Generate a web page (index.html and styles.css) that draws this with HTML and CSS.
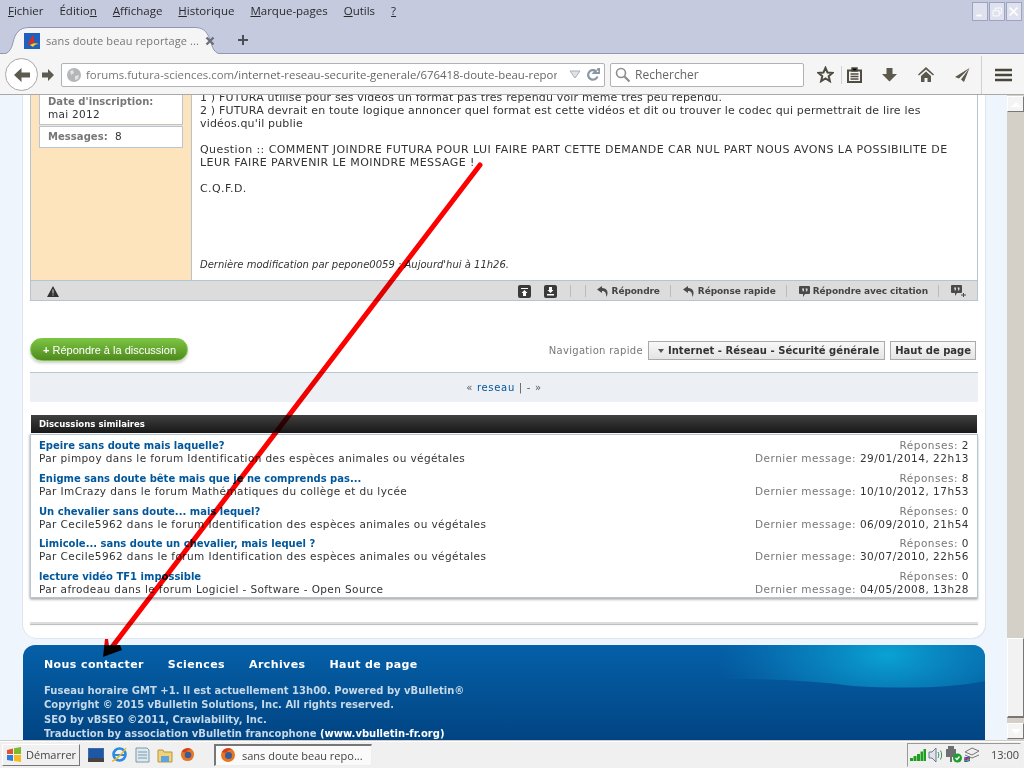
FILE: index.html
```html
<!DOCTYPE html>
<html lang="fr">
<head>
<meta charset="utf-8">
<title>sans doute beau reportage</title>
<link rel="stylesheet" href="styles.css">
</head>
<body>
<div class="chrome">
  <div class="menubar">
    <span class="mi"><u>F</u>ichier</span><span class="mi">Éditio<u>n</u></span><span class="mi"><u>A</u>ffichage</span><span class="mi"><u>H</u>istorique</span><span class="mi"><u>M</u>arque-pages</span><span class="mi"><u>O</u>utils</span><span class="mi"><u>?</u></span>
    <div class="winbtns">
      <span class="winbtn"><svg width="16" height="16" viewBox="0 0 16 16"><rect x="4" y="11" width="6" height="2" fill="#fff"/></svg></span>
      <span class="winbtn"><svg width="16" height="16" viewBox="0 0 16 16"><path d="M3.500 6.500h7v6h-7zM6 6V3.500h7v6h-2" fill="none" stroke="#fff"/></svg></span>
      <span class="winbtn"><svg width="16" height="16" viewBox="0 0 16 16"><path d="M3 3l9 9M12 3l-9 9" stroke="#fff" stroke-width="2"/></svg></span>
    </div>
  </div>
  <div class="tabbar">
    <div class="tab">
      <svg class="tabshape" width="226" height="28" viewBox="0 0 226 28"><path d="M0 27.500c8 0 11-4 13-12 2-9 6-15 16-15h166c10 0 13 6 16 15 2 8 5 12 14 12" fill="#f5f5f5" stroke="#8d98b4"/></svg>
      <svg class="favicon" width="16" height="16" viewBox="0 0 16 16"><rect width="16" height="16" fill="#1f5fc0"/><path d="M4 13C5 7 8 3 11 2c-2 3-2 6 1 8-3-1-6 0-8 3z" fill="#e02a1c"/><path d="M6 12c3-2 6-2 9-1-3 0-5 1-6 3z" fill="#f7d21a"/></svg>
      <span class="tabtitle">sans doute beau reportage ...</span>
      <svg class="tabclose" width="10" height="10" viewBox="0 0 10 10"><path d="M1.500 1.500l7 7M8.500 1.500l-7 7" stroke="#6c7078" stroke-width="2.400"/></svg>
    </div>
    <svg class="newtab" width="12" height="12" viewBox="0 0 12 12"><path d="M6 1v10M1 6h10" stroke="#4a5058" stroke-width="2"/></svg>
  </div>
  <div class="navbar">
    <span class="backbtn"><svg width="16" height="14" viewBox="0 0 16 14"><path d="M7.500 0L0 7l7.500 7V9.500H16v-5H7.500z" fill="#5d5a50"/></svg></span>
    <svg class="fwd" width="12" height="12" viewBox="0 0 12 12"><path d="M6 0l6 6-6 6V8.500H0v-5h6z" fill="#5d5a50"/></svg>
    <div class="urlbar">
      <svg class="globe" width="14" height="14" viewBox="0 0 14 14"><circle cx="7" cy="7" r="7" fill="#b4b6b8"/><path d="M3 3l3-1 1 3-3 2zM8 8l4-1-1 4-3 1z" fill="#e2e3e4"/></svg>
      <span class="urltext"><span class="urlhost">forums.futura-sciences.com</span>/internet-reseau-securite-generale/676418-doute-beau-repor</span>
      <svg class="drop" width="12" height="9" viewBox="0 0 12 9"><path d="M1 1h10L6 8z" fill="#dfe3e8" stroke="#a9afb6"/></svg>
      <svg class="reload" width="14" height="14" viewBox="0 0 14 14"><path d="M11.500 8.500A4.800 4.800 0 1 1 9.800 3L8 5h5.500V0L11.300 2.100" fill="none" stroke="#8a97a3" stroke-width="2.200"/></svg>
    </div>
    <div class="searchbar">
      <svg width="15" height="15" viewBox="0 0 15 15"><circle cx="6" cy="6" r="4.500" fill="none" stroke="#8c8f92" stroke-width="1.600"/><path d="M9.500 9.500l5 5" stroke="#8c8f92" stroke-width="2.200"/></svg>
      <span>Rechercher</span>
    </div>
    <div class="tools">
      <svg class="t-star" width="17" height="17" viewBox="0 0 17 17"><path d="M8.500 1.800l2 4.700 5 .4-3.800 3.300 1.200 5-4.400-2.700-4.400 2.700 1.200-5L1.500 6.900l5-.4z" fill="none" stroke="#4f4c41" stroke-width="2"/></svg>
      <i class="t-sep"></i>
      <svg class="t-clip" width="15" height="16" viewBox="0 0 15 16"><path d="M1 3.500h13V15H1z" fill="none" stroke="#4f4c41" stroke-width="2"/><path d="M5 1h5v3H5zM3.500 7h8M3.500 9.500h8M3.500 12h8" stroke="#4f4c41" stroke-width="1.500"/></svg>
      <svg class="t-down" width="15" height="15" viewBox="0 0 15 15"><path d="M4.500 1h6v6H15l-7.500 7.500L0 7h4.500z" fill="#5b584c"/></svg>
      <svg class="t-home" width="16" height="15" viewBox="0 0 16 15"><path d="M8 0l8 7.500-1 1L8 2.500 1 8.500l-1-1zM3 9l5-4.500L13 9v6H9.500v-4h-3v4H3z" fill="#5b584c"/></svg>
      <svg class="t-plane" width="15" height="16" viewBox="0 0 15 16"><path d="M14.500 1L0 10l4 1.500L14.500 1 6 12.500 9 15z" fill="#5b584c"/></svg>
      <i class="t-sep t-sep2"></i>
      <svg class="t-menu" width="17" height="14" viewBox="0 0 17 14"><path d="M0 2h17M0 7h17M0 12h17" stroke="#49473d" stroke-width="2.600"/></svg>
    </div>
  </div>
</div>

<main class="viewport">
  <div class="page">
    <div class="card">
      <article class="post">
        <aside class="userinfo">
          <div class="ubox ubox-date"><b>Date d'inscription:</b><br>mai 2012</div>
          <div class="ubox ubox-msg"><b>Messages:</b>&nbsp; 8</div>
        </aside>
        <div class="message">
          <p class="body">1 ) FUTURA utilise pour ses vidéos un format pas très répendu voir même très peu répendu.<br>2 ) FUTURA devrait en toute logique annoncer quel format est cette vidéos et dit ou trouver le codec qui permettrait de lire les vidéos.qu'il publie<br><br><span class="caps">Question :: COMMENT JOINDRE FUTURA POUR LUI FAIRE PART CETTE DEMANDE CAR NUL PART NOUS AVONS LA POSSIBILITE DE LEUR FAIRE PARVENIR LE MOINDRE MESSAGE !<br><br>C.Q.F.D.</span></p>
          <p class="edited">Dernière modification par pepone0059 ; Aujourd'hui à 11h26.</p>
        </div>
        <div class="postbar">
          <svg class="warn" width="12" height="11" viewBox="0 0 12 11"><path d="M6 0l6 11H0z" fill="#333"/><path d="M5.500 3.500h1v4h-1zM5.500 8.500h1v1h-1z" fill="#ddd"/></svg>
          <div class="postactions">
            <svg class="boxic" width="13" height="13" viewBox="0 0 13 13"><rect width="13" height="13" rx="2" fill="#3a3a3a"/><path d="M3 3h7v1H3zM6.500 5l3 3H8v3H5V8H3.500z" fill="#fff"/></svg>
            <svg class="boxic" width="13" height="13" viewBox="0 0 13 13"><rect width="13" height="13" rx="2" fill="#3a3a3a"/><path d="M5 2h3v3h1.500l-3 3-3-3H5zM3 9h7v1.500H3z" fill="#fff"/></svg>
            <i class="asep asep-a"></i><i class="asep asep-b"></i>
            <svg class="reply" width="12" height="11" viewBox="0 0 12 11"><path d="M5 0L0 3.500 5 7V5c3 0 4 1.500 4.500 6C12 6 10 2 5 2z" fill="#4a4a4a"/></svg>
            <span class="act">Répondre</span><i class="asep"></i>
            <svg class="reply" width="12" height="11" viewBox="0 0 12 11"><path d="M5 0L0 3.500 5 7V5c3 0 4 1.500 4.500 6C12 6 10 2 5 2z" fill="#4a4a4a"/></svg>
            <span class="act">Réponse rapide</span><i class="asep"></i>
            <svg class="reply" width="11" height="11" viewBox="0 0 11 11"><path d="M1 0h9a1 1 0 0 1 1 1v6a1 1 0 0 1-1 1H6l-2 3V8H1a1 1 0 0 1-1-1V1a1 1 0 0 1 1-1z" fill="#4a4a4a"/><path d="M3 2.500h2v2l-1 1.500M6.500 2.500h2v2l-1 1.500" fill="#ddd"/></svg>
            <span class="act">Répondre avec citation</span><i class="asep"></i>
            <svg class="reply" width="15" height="12" viewBox="0 0 15 12"><path d="M1 0h9a1 1 0 0 1 1 1v6a1 1 0 0 1-1 1H6l-2 3V8H1a1 1 0 0 1-1-1V1a1 1 0 0 1 1-1z" fill="#4a4a4a"/><path d="M3 2.500h2v2l-1 1.500M6.500 2.500h2v2l-1 1.500" fill="#ddd"/><path d="M12 8h1v1.500h2v1h-2V12h-1v-1.500h-2v-1h2z" fill="#4a4a4a"/></svg>
          </div>
        </div>
      </article>

      <div class="actionrow">
        <a class="replybtn"><b>+</b> Répondre à la discussion</a>
        <div class="quicknav">
          <span class="qlabel">Navigation rapide</span>
          <span class="qbtn qbtn-sel"><i class="caret"></i>Internet - Réseau - Sécurité générale</span>
          <span class="qbtn qbtn-top">Haut de page</span>
        </div>
      </div>

      <div class="pager">« <a>reseau</a> | - »</div>

      <section class="similar">
        <h2 class="simhead">Discussions similaires</h2>
        <ul class="simlist">
          <li class="simrow"><div class="simleft"><a class="simtitle">Epeire sans doute mais laquelle?</a><span class="simsub">Par pimpoy dans le forum Identification des espèces animales ou végétales</span></div><div class="simright"><span class="lbl">Réponses: <em>2</em></span><span class="lbl">Dernier message: <em>29/01/2014, 22h13</em></span></div></li>
          <li class="simrow"><div class="simleft"><a class="simtitle">Enigme sans doute bête mais que je ne comprends pas...</a><span class="simsub">Par ImCrazy dans le forum Mathématiques du collège et du lycée</span></div><div class="simright"><span class="lbl">Réponses: <em>8</em></span><span class="lbl">Dernier message: <em>10/10/2012, 17h53</em></span></div></li>
          <li class="simrow"><div class="simleft"><a class="simtitle">Un chevalier sans doute... mais lequel?</a><span class="simsub">Par Cecile5962 dans le forum Identification des espèces animales ou végétales</span></div><div class="simright"><span class="lbl">Réponses: <em>0</em></span><span class="lbl">Dernier message: <em>06/09/2010, 21h54</em></span></div></li>
          <li class="simrow"><div class="simleft"><a class="simtitle">Limicole... sans doute un chevalier, mais lequel ?</a><span class="simsub">Par Cecile5962 dans le forum Identification des espèces animales ou végétales</span></div><div class="simright"><span class="lbl">Réponses: <em>0</em></span><span class="lbl">Dernier message: <em>30/07/2010, 22h56</em></span></div></li>
          <li class="simrow"><div class="simleft"><a class="simtitle">lecture vidéo TF1 impossible</a><span class="simsub">Par afrodeau dans le forum Logiciel - Software - Open Source</span></div><div class="simright"><span class="lbl">Réponses: <em>0</em></span><span class="lbl">Dernier message: <em>04/05/2008, 13h28</em></span></div></li>
        </ul>
      </section>
      <div class="below"></div>
    </div>

    <footer class="footer">
      <svg class="footglow" width="962" height="48" viewBox="0 0 962 48"><defs><radialGradient id="glow" gradientUnits="userSpaceOnUse" cx="864" cy="10" r="170" gradientTransform="translate(0 5) scale(1 .5)"><stop offset="0" stop-color="#0aa6d6" stop-opacity=".95"/><stop offset=".55" stop-color="#0a8cc4" stop-opacity=".55"/><stop offset="1" stop-color="#0a7cb8" stop-opacity="0"/></radialGradient></defs><path d="M640 0H962V36C930 43 880 44 830 41 790 36 750 34 710 34 680 30 660 14 640 0z" fill="url(#glow)"/></svg>
      <nav class="footnav"><a>Nous contacter</a><a>Sciences</a><a>Archives</a><a>Haut de page</a></nav>
      <p class="copy">Fuseau horaire GMT +1. Il est actuellement 13h00. Powered by vBulletin®<br>Copyright © 2015 vBulletin Solutions, Inc. All rights reserved.<br>SEO by vBSEO ©2011, Crawlability, Inc.<br>Traduction by association vBulletin francophone <strong>(www.vbulletin-fr.org)</strong></p>
    </footer>
  </div>

  <div class="scrollbar">
    <span class="sbtn"><i class="sup"></i></span>
    <span class="sthumb"></span>
    <span class="sbtn sbtn-down"><i class="sdown"></i></span>
  </div>

  <svg class="annot" width="1024" height="645" viewBox="0 95 1024 645"><path d="M480 165L109 651" stroke="#ff0000" stroke-width="5" stroke-linecap="round" fill="none"/><path d="M103 657L105 639H108L109 646 120 645 122 650z" fill="#ff0000"/></svg>
</main>

<footer class="taskbar">
  <div class="startbtn">
    <svg width="16" height="16" viewBox="0 0 16 16"><path d="M1 3l6-1.500V7H1z" fill="#e5532d"/><path d="M8 1.300L15 0v7H8z" fill="#7cbb2e"/><path d="M1 8h6v6l-6-1z" fill="#2f7fd8"/><path d="M8 8h7v7l-7-1z" fill="#f7bb1c"/></svg>
    <span>Démarrer</span>
  </div>
  <div class="quick">
    <svg width="16" height="14" viewBox="0 0 16 14"><rect width="16" height="14" fill="#3a6ea8"/><rect x="1" y="1" width="14" height="9" fill="#2056a6"/><rect y="10" width="16" height="4" fill="#444"/></svg>
    <svg width="17" height="17" viewBox="0 0 17 17"><circle cx="8.500" cy="8.500" r="6" fill="none" stroke="#2b8be0" stroke-width="2.600"/><path d="M3 9h11" stroke="#2b8be0" stroke-width="2"/><path d="M1 15c3 0 11-8 14-13" fill="none" stroke="#f1b71c" stroke-width="1.400"/></svg>
    <svg width="15" height="16" viewBox="0 0 15 16"><path d="M1 1h11l2 2v12H1z" fill="#dce9ef" stroke="#7d98a8"/><path d="M3 5h9M3 8h9M3 11h9" stroke="#7d98a8"/></svg>
    <svg width="16" height="16" viewBox="0 0 16 16"><path d="M1 3h5l1 2h8v10H1z" fill="#f1d27a" stroke="#b6953e"/><rect x="4" y="9" width="8" height="6" fill="#5ea3da"/></svg>
    <svg width="15" height="15" viewBox="0 0 16 16"><circle cx="8" cy="8" r="7" fill="#e8761c"/><circle cx="8.500" cy="8.500" r="3.500" fill="#3a5a9e"/><path d="M2 5c2-4 8-5 11-2-3-1-5 0-6 2-1 1-3 1-5 0z" fill="#d63b1f"/></svg>
  </div>
  <div class="taskbtn">
    <svg width="16" height="16" viewBox="0 0 16 16"><circle cx="8" cy="8" r="7" fill="#e8761c"/><circle cx="8.500" cy="8.500" r="3.500" fill="#3a5a9e"/><path d="M2 5c2-4 8-5 11-2-3-1-5 0-6 2-1 1-3 1-5 0z" fill="#d63b1f"/></svg>
    <span>sans doute beau repo...</span>
  </div>
  <div class="tray">
    <svg width="16" height="12" viewBox="0 0 16 12"><path d="M0 9h3v3H0zM3.500 7h3v5h-3zM7 5h3v7H7zM10.500 2.500h2.500V12h-2.500zM13.500 0H16v12h-2.500z" fill="#1f9e1f"/></svg>
    <svg width="16" height="16" viewBox="0 0 16 16"><path d="M1 5h3l4-4v14l-4-4H1z" fill="#e0e4ea" stroke="#6b7a8c"/><path d="M10 5c1 2 1 4 0 6M12.500 3.500c1.500 3 1.500 6 0 9" fill="none" stroke="#3f8d5a"/></svg>
    <svg width="16" height="17" viewBox="0 0 16 17"><path d="M2 0h6v3h2v8H6v5H4v-5H0V3h2z" fill="#6d6f73"/><circle cx="11.500" cy="12" r="4.500" fill="#1f9e2f"/><path d="M9.500 12l1.500 1.500 2.500-3" fill="none" stroke="#fff" stroke-width="1.400"/></svg>
    <svg width="16" height="15" viewBox="0 0 16 15"><path d="M1 5l7-4 7 3-7 4z" fill="#eee" stroke="#777"/><path d="M1 8l7 3 7-3" fill="none" stroke="#777"/><path d="M0 11l6-1M0 13l6-1.500M0 15l6-1.500" stroke="#2030d0"/><path d="M0 12l6-1" stroke="#e02020"/><path d="M0 14l6-1.500" stroke="#20a020"/></svg>
    <span class="clock">13:00</span>
  </div>
</footer>
</body>
</html>
```
FILE: styles.css
```css
*{box-sizing:border-box}
html,body{margin:0;padding:0;height:100%;overflow:hidden}
body{width:1024px;height:768px;display:flex;flex-direction:column;font-family:"DejaVu Sans","Liberation Sans",sans-serif;font-size:11px;color:#333;background:#f0f0f0}
u{text-decoration:underline}
i,em{font-style:normal}
a{color:inherit;text-decoration:none}

/* browser chrome */
.chrome{background:#c5cadf;flex:none}
.menubar{height:27px;display:flex;align-items:flex-start;padding:3px 0 0 8px;font:11.500px "Open Sans","Noto Sans",sans-serif;color:#2a2a2a;gap:16px}
.mi{line-height:15px}
.winbtns{margin-left:auto;display:flex;gap:1px;margin-right:2px;margin-top:-1px}
.winbtn{width:16px;height:19px;background:#dfe2ee;border:1px solid #f2f3f8;outline:1px solid #9da4bd;outline-offset:-1px;display:flex;align-items:center;justify-content:center}
.tabbar{height:27px;position:relative;display:flex;align-items:center;border-bottom:1px solid #8d98b4}
.tab{position:relative;width:226px;height:28px;margin-bottom:-1px;display:flex;align-items:center;padding-left:24px;font:11px "Open Sans","Noto Sans",sans-serif;color:#777}
.tabshape{position:absolute;left:0;top:0}
.favicon,.tabtitle,.tabclose{position:relative;flex:none}
.tabtitle{margin-left:6px;width:155px;white-space:nowrap;overflow:hidden;letter-spacing:.1px}
.tabclose{margin-left:4px}
.newtab{margin-left:11px}
.navbar{height:41px;background:#f5f5f5;display:flex;align-items:center;position:relative;padding:1px 0 0 5px;border-bottom:1px solid #a9a9a9}
.backbtn{width:33px;height:33px;border-radius:50%;background:#fff;border:1px solid #a8a8a8;display:flex;align-items:center;justify-content:center;flex:none}
.fwd{margin-left:4px;flex:none}
.urlbar{width:544px;height:24px;margin-left:7px;background:#fff;border:1px solid #b2b2b2;border-radius:2px;display:flex;align-items:center;padding-left:5px;flex:none}
.urltext{margin-left:5px;width:471px;white-space:nowrap;overflow:hidden;font:11.400px "Open Sans","Noto Sans",sans-serif;color:#666}
.urlhost{color:#777}
.drop{margin-left:12px}
.reload{margin-left:5px}
.searchbar{width:194px;height:24px;margin-left:5px;background:#fff;border:1px solid #b2b2b2;border-radius:2px;display:flex;align-items:center;padding-left:4px;gap:5px;font:12px "Open Sans","Noto Sans",sans-serif;color:#666;flex:none}
.tools{display:flex;align-items:center;margin-left:13px;height:39px}
.t-sep{width:1px;height:18px;background:#d0d0d0;margin:0 5px 0 7px}
.t-clip{margin-right:20px}
.t-down{margin-right:21px}
.t-home{margin-right:21px}
.t-sep2{height:38px;margin:0 13px 0 11px}

/* viewport */
.viewport{flex:none;height:645px;position:relative;display:flex;overflow:hidden;background:#eef5fd}
.page{width:1007px;flex:none;margin-top:-20px;padding-left:23px;padding-right:22px}
.annot{position:absolute;left:0;top:0;mix-blend-mode:multiply;pointer-events:none}
.card{background:#fff;border-radius:0 0 14px 14px;padding:0 7px;height:563px;box-shadow:-1px 0 0 #dfe5ee,1px 1px 1px #dfe5ee}
.post{display:grid;grid-template-columns:161px 1fr;grid-template-rows:205px 20px;border:1px solid #b7c3ce;border-top:0;width:948px}
.userinfo{background:#fde4bd;border-right:1px solid #b7c3ce;padding:15px 8px 0;color:#333}
.ubox{background:#fff;border:1px solid #b7c6d6;padding:0 8px;font-size:10.500px;letter-spacing:.3px;line-height:13px}
.ubox b{color:#777;font-size:10px;letter-spacing:.05px}
.ubox-date{height:35px;padding-top:4px}
.ubox-msg{height:22px;margin-top:1px;padding-top:3px}
.message{padding:16px 8px 9px;display:flex;flex-direction:column}
.body{margin:0;font-size:11px;line-height:13px;letter-spacing:.17px;color:#333}
.caps{letter-spacing:.42px}
.edited{margin:auto 0 0;font-size:10px;font-style:italic;line-height:13px;color:#333}
.postbar{grid-column:1/3;background:#dcdcdc;border-top:1px solid #b7c3ce;display:flex;align-items:center;padding:1px 0 0 16px}
.postactions{margin-left:auto;display:flex;align-items:center;padding-right:11px}
.boxic{margin-right:13px}
.asep{width:1px;height:12px;background:#bbb;margin:0 12px 0 0}
.asep-a{margin-right:14px}
.asep-b{margin-right:11px}
.act{font-size:9px;font-weight:700;color:#444;margin-left:3px;margin-right:10px;letter-spacing:-.1px}

.actionrow{display:flex;justify-content:space-between;height:71px;padding-top:37px;align-items:flex-start}
.replybtn{width:158px;height:23px;border-radius:12px;background:linear-gradient(#7cc342,#4f8a1e);border:1px solid #78c540;color:#fff;font:11px/22px "Liberation Sans",sans-serif;padding-left:12px;white-space:nowrap;box-shadow:0 2px 3px rgba(0,0,0,.2)}
.quicknav{display:flex;align-items:center;padding-top:3px;padding-right:2px}
.qlabel{color:#777;font-size:10px;letter-spacing:.3px;margin-right:5px}
.qbtn{height:19px;border:1px solid #aaa;background:linear-gradient(#f8f8f8,#e4e4e4);font-size:10px;font-weight:700;color:#333;line-height:17px;padding:0 4px;display:flex;align-items:center}
.qbtn-sel{padding:0 5px 0 9px;letter-spacing:.05px}
.qbtn-top{margin-left:5px}
.caret{width:0;height:0;border:3px solid transparent;border-top:4px solid #555;border-bottom:0;margin-right:4px}
.pager{height:30px;background:#ecf0f5;border-top:1px solid #b7c6d3;text-align:center;line-height:29px;color:#555;font-size:10px;letter-spacing:.7px}
.pager a{color:#00579b}
.similar{margin-top:13px}
.simhead{margin:0 1px;height:18px;background:linear-gradient(#404040,#181818);color:#fff;font-size:9.500px;font-stretch:condensed;font-weight:700;line-height:18px;padding-left:8px}
.simlist{list-style:none;margin:1px 0 0;padding:2px 0 0;border:1px solid #b7c6d3;height:164px;box-shadow:0 2px 2px rgba(0,0,0,.25),-1px 0 2px rgba(0,0,0,.15)}
.simrow{height:32.800px;display:flex;justify-content:space-between;padding:2px 8px 0;line-height:13px}
.simleft,.simright{display:flex;flex-direction:column}
.simright{align-items:flex-end}
.simtitle{font-size:10px;font-weight:700;color:#00579b;white-space:nowrap}
.simsub{font-size:10.500px;letter-spacing:.4px;color:#333;white-space:nowrap}
.lbl{font-size:10.500px;letter-spacing:.5px;color:#777;white-space:nowrap}
.lbl em{color:#333}
.below{height:2px;margin-top:24px;background:#ddd;box-shadow:0 1px 1px #bbb}

.footer{position:relative;margin-top:7px;height:130px;border-radius:12px 12px 0 0;padding:13px 21px 0;background:linear-gradient(#0560a8,#003a75);color:#c6d9e8;overflow:hidden}
.footglow{position:absolute;left:0;top:0}
.footnav{position:relative;display:flex;gap:24px;color:#fff;font-size:11px;letter-spacing:.4px;font-weight:700;line-height:14px}
.copy{position:relative;margin:12px 0 0;font-size:10px;font-weight:700;line-height:14.400px}
.copy strong{color:#fff}

/* scrollbar */
.scrollbar{width:17px;flex:none;background:#d4d0c8;display:flex;flex-direction:column;padding-top:1px}
.sbtn{height:16px;background:#f4f4f4;border:1px solid #fff;border-right-color:#777;border-bottom-color:#777;display:flex;align-items:center;justify-content:center;flex:none}
.sup{border:5px solid transparent;border-bottom:5px solid #fff;border-top:0}
.sdown{border:5px solid transparent;border-top:5px solid #fff;border-bottom:0}
.sthumb{height:80px;margin-top:526px;background:#f2f2f2;border:1px solid #fff;border-right-color:#777;border-bottom:2px solid #777;flex:none}
.sbtn-down{margin-top:5px}

/* taskbar */
.taskbar{flex:none;height:28px;background:#f0f0f0;border-top:1px solid #cfcbc4;box-shadow:inset 0 1px 0 #fff;display:flex;align-items:center;padding-left:2px;font:11px "Open Sans","Noto Sans",sans-serif;color:#444}
.startbtn{width:78px;height:22px;border:1px solid;border-color:#fff #777 #777 #fff;display:flex;align-items:center;gap:4px;padding-left:3px}
.quick{display:flex;align-items:center;gap:7px;margin-left:8px;width:124px}
.taskbtn{width:158px;height:22px;border:1px solid;border-color:#777 #eee #eee #777;border-width:2px 1px 1px 2px;background:#fafafa;display:flex;align-items:center;gap:6px;padding-left:4px;margin-left:2px;white-space:nowrap;overflow:hidden}
.tray{margin-left:auto;margin-right:3px;width:114px;height:24px;border:1px solid #999;border-right-color:#eee;border-bottom-color:#eee;display:flex;align-items:center;gap:2px;padding-left:2px}
.clock{margin-left:9px}
```
